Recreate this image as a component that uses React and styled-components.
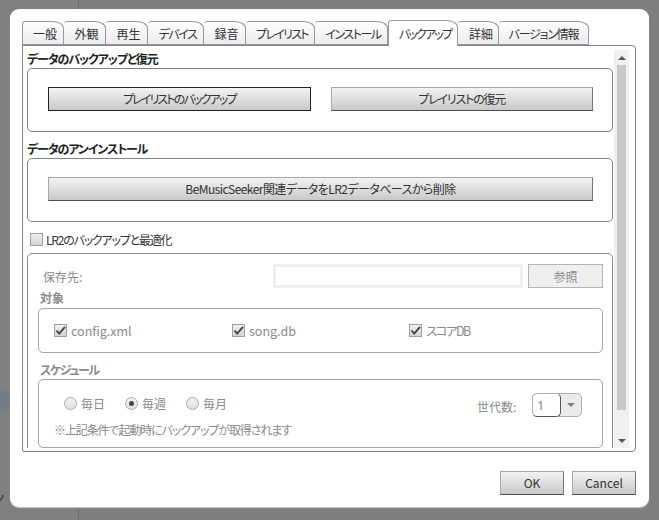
import styled, { createGlobalStyle } from "styled-components";

const GlobalStyle = createGlobalStyle`
  html, body {
    margin: 0;
    padding: 0;
  }
  body {
    font-family: "Noto Sans CJK JP", "Noto Sans", sans-serif;
    font-size: 12px;
    font-feature-settings: "palt";
    color: #333;
  }
  * {
    box-sizing: border-box;
  }
`;

const Backdrop = styled.div`
  position: relative;
  width: 659px;
  height: 520px;
  overflow: hidden;
  background-color: #7f7f7f;
`;

const Sidebar = styled.div`
  width: 79px;
  height: 100%;
  padding-top: 391px;
  border-right: 1px solid #6f6f6f;
  background-color: #808080;
`;

const SidebarRow = styled.div`
  width: 100%;
  height: 20px;
  background-color: #747c88;
`;

const SidebarText = styled.div`
  width: 4px;
  margin-top: 80px;
  overflow: hidden;
  font-size: 11px;
  line-height: 14px;
  color: #222;
  direction: rtl;
`;

const Dialog = styled.div`
  position: absolute;
  top: 9px;
  left: 10px;
  width: 639px;
  height: 498px;
  display: flex;
  flex-direction: column;
  padding: 11px 13px 0 12px;
  border-radius: 9px;
  background-color: #fff;
  box-shadow: 0 1px 1px #c8c8c8;
`;

const TabBar = styled.div`
  display: flex;
  align-items: flex-end;
  height: 25px;
`;

const Tab = styled.div`
  width: ${({ $width }) => $width}px;
  height: ${({ $active }) => ($active ? 26 : 24)}px;
  margin-bottom: ${({ $active }) => ($active ? -1 : 0)}px;
  position: relative;
  z-index: ${({ $active }) => ($active ? 2 : 0)};
  display: flex;
  align-items: center;
  justify-content: center;
  padding: 1px 0 0 ${({ $inset }) => $inset ?? 4}px;
  border: 1px solid #999;
  border-bottom: ${({ $active }) => ($active ? "none" : "1px solid #999")};
  border-left: ${({ $first, $active }) => ($first || $active ? "1px solid #999" : "none")};
  border-radius: 3px 12px 0 0 / 3px 7px 0 0;
  background: ${({ $active }) => ($active ? "#fff" : "linear-gradient(#fff, #ececec)")};
  font-size: 12px;
  line-height: 16px;
  letter-spacing: ${({ $spacing }) => $spacing || 0}px;
  white-space: nowrap;
  color: #333;
`;

const Pane = styled.div`
  display: flex;
  height: 407px;
  border: 1px solid #7f8387;
  border-radius: 0 4px 4px 2px;
  position: relative;
  z-index: 1;
  background-color: #fff;
  overflow: hidden;
`;

const Content = styled.div`
  width: 590px;
  height: 402px;
  padding: 4px 0 0 4px;
  overflow: hidden;
`;

const Heading = styled.div`
  height: 18px;
  margin-top: ${({ $top }) => $top || 0}px;
  font-size: 12px;
  font-weight: 700;
  line-height: 17px;
  letter-spacing: -1.1px;
  color: #222;
`;

const Group = styled.div`
  height: 64px;
  width: 586px;
  display: flex;
  gap: 20px;
  padding: 18px 19px 0 20px;
  border: 1px solid #7f8387;
  border-radius: 5px;
`;

const Button = styled.button`
  flex: ${({ $fixed }) => ($fixed ? "none" : 1)};
  width: ${({ $fixed }) => ($fixed ? "64px" : "auto")};
  height: 24px;
  padding: 0;
  border: 1px solid ${({ $focused }) => ($focused ? "#222" : "#a8a8a8")};
  border-bottom-color: ${({ $focused }) => ($focused ? "#222" : "#4c4c4c")};
  border-right-color: ${({ $focused }) => ($focused ? "#222" : "#777")};
  background: linear-gradient(#f3f3f3, #c9c9c9);
  font-family: inherit;
  font-feature-settings: inherit;
  font-size: 12px;
  line-height: 16px;
  letter-spacing: ${({ $spacing }) => $spacing || 0}px;
  color: #333;
`;

const ToggleRow = styled.div`
  display: flex;
  align-items: center;
  gap: 3px;
  height: 18px;
  margin: 8px 0 5px 3px;
  font-size: 12px;
  letter-spacing: -1.2px;
  color: #333;
`;

const CheckBox = styled.span`
  width: 13px;
  height: 13px;
  flex: none;
  display: flex;
  align-items: center;
  justify-content: center;
  border: 1px solid #a0a0a0;
  background: linear-gradient(#f0f0f0, #d4d4d4);
`;

const OuterGroup = styled.div`
  width: 586px;
  height: 240px;
  padding: 10px 9px 0 10px;
  border: 1px solid #8c8c8c;
  border-radius: 5px;
  color: #8a8a8a;
`;

const PathRow = styled.div`
  display: flex;
  align-items: center;
  gap: 5px;
  height: 24px;
`;

const PathLabel = styled.div`
  flex: 1;
  padding-left: 5px;
`;

const PathInput = styled.div`
  width: 250px;
  height: 24px;
  border: 3px solid #efefef;
  border-radius: 2px;
`;

const BrowseButton = styled.div`
  width: 75px;
  height: 24px;
  display: flex;
  align-items: center;
  justify-content: center;
  border: 1px solid #b4b4b4;
  background-color: #efefef;
`;

const SubHeading = styled.div`
  height: ${({ $height }) => $height}px;
  margin-top: ${({ $top }) => $top}px;
  padding-left: 2px;
  font-weight: 700;
  line-height: ${({ $height }) => $height}px;
  letter-spacing: ${({ $spacing }) => $spacing || 0}px;
  color: #8a8a8a;
`;

const TargetGroup = styled.div`
  height: 45px;
  display: grid;
  grid-template-columns: 178px 177px 1fr;
  align-items: center;
  padding: 0 15px;
  border: 1px solid #a6a6a6;
  border-radius: 5px;
`;

const CheckItem = styled.div`
  display: flex;
  align-items: center;
  gap: 4px;
  font-size: 12.5px;
  letter-spacing: ${({ $spacing }) => $spacing || 0}px;
  color: #8a8a8a;
`;

const ScheduleGroup = styled.div`
  height: 69px;
  display: flex;
  justify-content: space-between;
  padding: 13px 20px 0 15px;
  border: 1px solid #a6a6a6;
  border-radius: 5px;
`;

const RadioRow = styled.div`
  display: flex;
  align-items: center;
  height: 20px;
  padding-left: 10px;
`;

const RadioItem = styled.div`
  width: 61px;
  display: flex;
  align-items: center;
  gap: 4px;
`;

const Radio = styled.span`
  width: 13px;
  height: 13px;
  display: flex;
  align-items: center;
  justify-content: center;
  border: 1px solid #ababab;
  border-radius: 50%;
  background: linear-gradient(#f2f2f2, #e0e0e0);
  &::after {
    content: "";
    display: ${({ $checked }) => ($checked ? "block" : "none")};
    width: 5px;
    height: 5px;
    border-radius: 50%;
    background-color: #444;
  }
`;

const Note = styled.div`
  margin-top: 8px;
  line-height: 18px;
  letter-spacing: -1.1px;
`;

const GenerationBox = styled.div`
  display: flex;
  align-items: center;
  height: 24px;
`;

const GenerationLabel = styled.div`
  width: 55px;
  padding-top: 3px;
`;

const ComboBox = styled.div`
  display: flex;
  width: 50px;
  height: 24px;
  border: 1px solid #b0b0b0;
  border-radius: 5px;
  background-color: #ebebeb;
`;

const ComboValue = styled.div`
  width: 29px;
  height: 24px;
  margin: -1px 0 0 -1px;
  padding-left: 4px;
  border: 1px solid #b0b0b0;
  border-bottom-color: #555;
  border-right-color: #555;
  border-radius: 5px;
  background-color: #fff;
  font-family: "Noto Sans", sans-serif;
  font-size: 13px;
  line-height: 22px;
`;

const ComboArrow = styled.div`
  flex: 1;
  display: flex;
  align-items: center;
  justify-content: center;
`;

const Scrollbar = styled.div`
  width: 15px;
  height: 398px;
  margin: 4px 0 0 1px;
  display: flex;
  flex-direction: column;
  align-items: center;
  background-color: #f0f0f0;
`;

const ArrowButton = styled.div`
  height: 15px;
  display: flex;
  align-items: center;
  justify-content: center;
`;

const ScrollSpace = styled.div`
  flex: 1;
  width: 100%;
  padding: 0 3px 23px;
`;

const ScrollThumb = styled.div`
  height: 100%;
  background-color: #c8c8c8;
`;

const Triangle = styled.span`
  width: 0;
  height: 0;
  border-left: 4px solid transparent;
  border-right: 4px solid transparent;
  border-top: ${({ $up, $color }) => ($up ? "none" : `4px solid ${$color}`)};
  border-bottom: ${({ $up, $color }) => ($up ? `4px solid ${$color}` : "none")};
`;

const Footer = styled.div`
  display: flex;
  justify-content: flex-end;
  gap: 8px;
  margin-top: 19px;
`;

const Check = () => (
  <svg width="11" height="11" viewBox="0 0 11 11">
    <path d="M1.5 5.5 L4.2 8.6 L10 1.8" fill="none" stroke="#444" strokeWidth="1.9" />
  </svg>
);

const tabs = [
  { label: "一般", width: 42 },
  { label: "外観", width: 42 },
  { label: "再生", width: 42 },
  { label: "デバイス", width: 56, spacing: -1.5 },
  { label: "録音", width: 42 },
  { label: "プレイリスト", width: 69, spacing: -1.7 },
  { label: "インストール", width: 73, spacing: -1.5 },
  { label: "バックアップ", width: 70, spacing: -1.8, active: true },
  { label: "詳細", width: 41, inset: 6 },
  { label: "バージョン情報", width: 90, spacing: -1.2, inset: 0 },
];

const App = () => {
  return (
    <Backdrop>
      <GlobalStyle />
      <Sidebar>
        <SidebarRow />
        <SidebarText>ツ</SidebarText>
      </Sidebar>
      <Dialog>
        <TabBar>
          {tabs.map((tab, i) => (
            <Tab
              key={tab.label}
              $width={tab.width}
              $active={tab.active}
              $first={i === 0}
              $spacing={tab.spacing}
              $inset={tab.inset}
            >
              {tab.label}
            </Tab>
          ))}
        </TabBar>
        <Pane>
          <Content>
            <Heading>データのバックアップと復元</Heading>
            <Group>
              <Button $focused $spacing={-1.85}>プレイリストのバックアップ</Button>
              <Button $spacing={-1.2}>プレイリストの復元</Button>
            </Group>
            <Heading $top={8}>データのアンインストール</Heading>
            <Group>
              <Button $spacing={-0.55}>BeMusicSeeker関連データをLR2データベースから削除</Button>
            </Group>
            <ToggleRow>
              <CheckBox />
              LR2のバックアップと最適化
            </ToggleRow>
            <OuterGroup>
              <PathRow>
                <PathLabel>保存先:</PathLabel>
                <PathInput />
                <BrowseButton>参照</BrowseButton>
              </PathRow>
              <SubHeading $top={0} $height={20}>対象</SubHeading>
              <TargetGroup>
                <CheckItem>
                  <CheckBox><Check /></CheckBox>
                  config.xml
                </CheckItem>
                <CheckItem>
                  <CheckBox><Check /></CheckBox>
                  song.db
                </CheckItem>
                <CheckItem $spacing={-1.6}>
                  <CheckBox><Check /></CheckBox>
                  スコアDB
                </CheckItem>
              </TargetGroup>
              <SubHeading $top={7} $height={19} $spacing={-1.4}>スケジュール</SubHeading>
              <ScheduleGroup>
                <div>
                  <RadioRow>
                    <RadioItem><Radio />毎日</RadioItem>
                    <RadioItem><Radio $checked />毎週</RadioItem>
                    <RadioItem><Radio />毎月</RadioItem>
                  </RadioRow>
                  <Note>※上記条件で起動時にバックアップが取得されます</Note>
                </div>
                <GenerationBox>
                  <GenerationLabel>世代数:</GenerationLabel>
                  <ComboBox>
                    <ComboValue>1</ComboValue>
                    <ComboArrow><Triangle $color="#808080" /></ComboArrow>
                  </ComboBox>
                </GenerationBox>
              </ScheduleGroup>
            </OuterGroup>
          </Content>
          <Scrollbar>
            <ArrowButton><Triangle $up $color="#555" /></ArrowButton>
            <ScrollSpace><ScrollThumb /></ScrollSpace>
            <ArrowButton><Triangle $color="#555" /></ArrowButton>
          </Scrollbar>
        </Pane>
        <Footer>
          <Button $fixed>OK</Button>
          <Button $fixed>Cancel</Button>
        </Footer>
      </Dialog>
    </Backdrop>
  );
};

export default App;
